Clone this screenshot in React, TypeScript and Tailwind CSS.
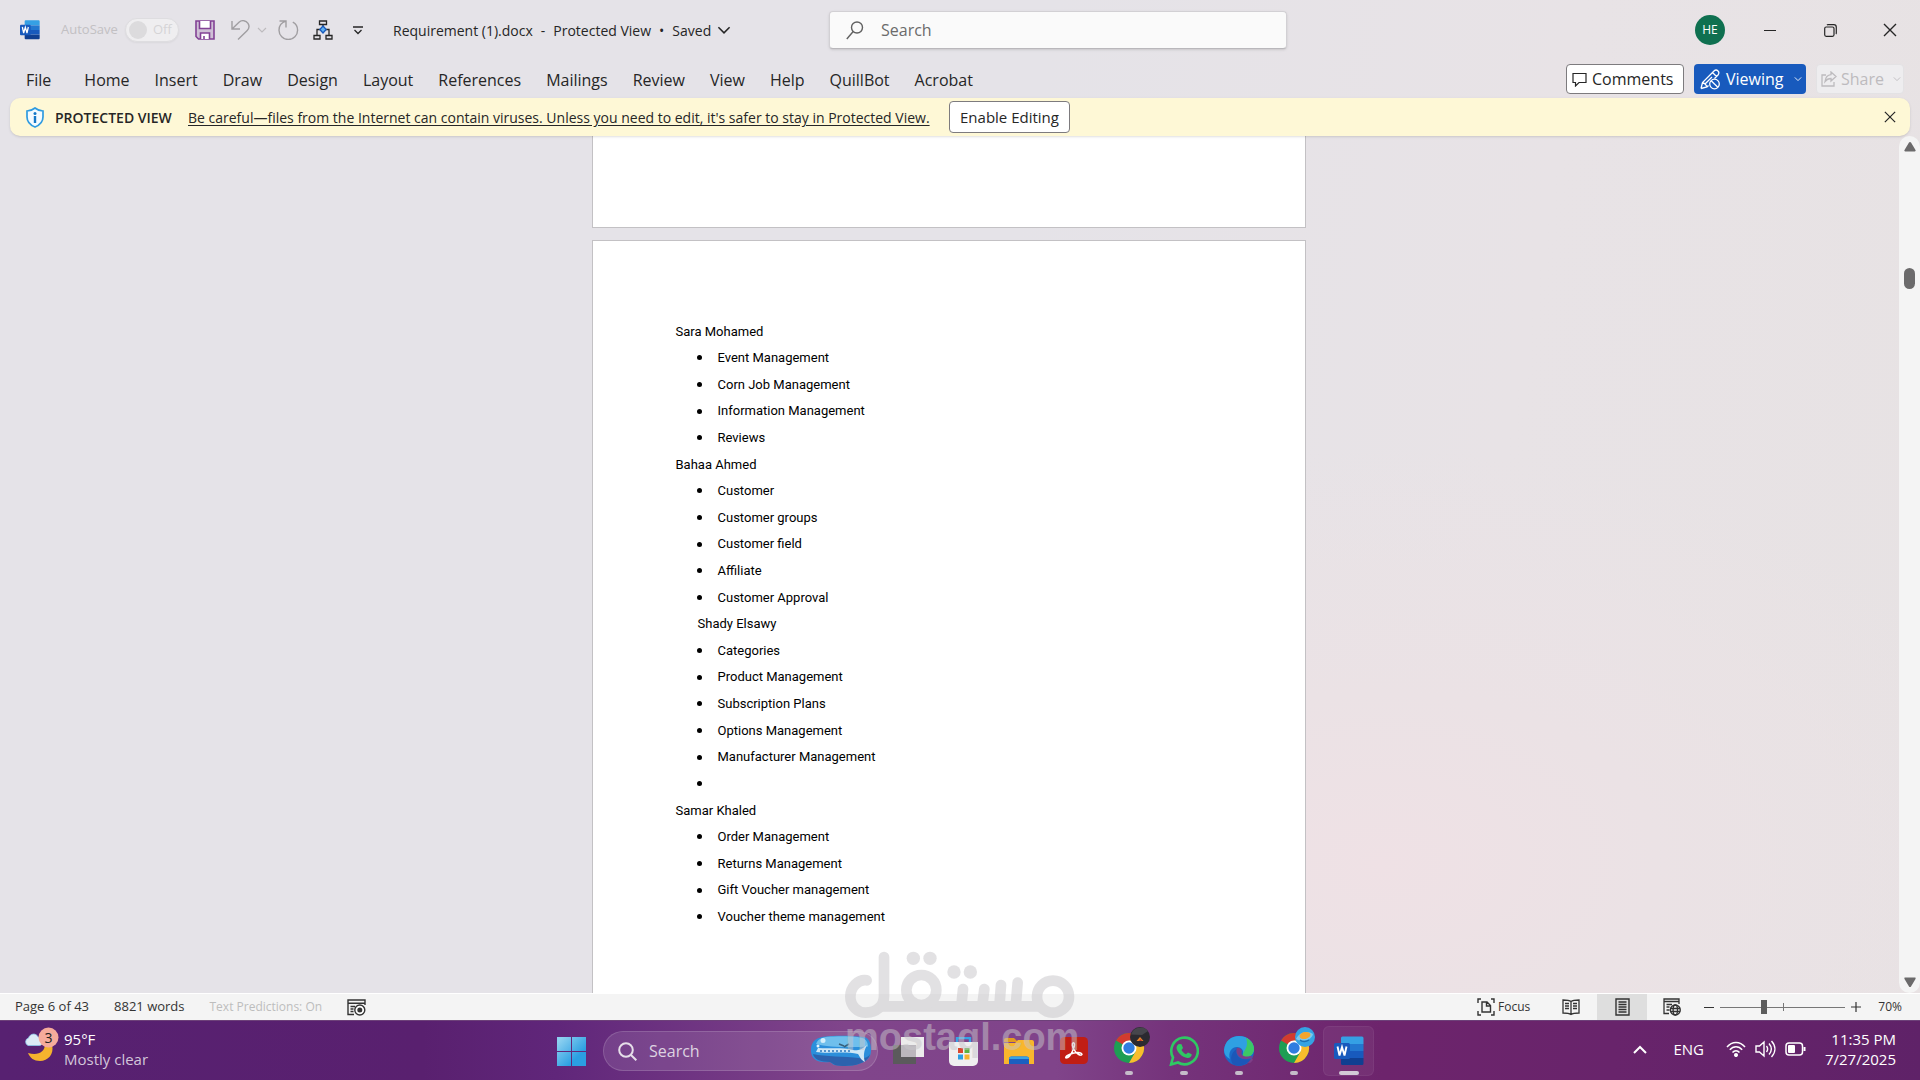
import React from "react";

type Kids = { children?: React.ReactNode };

const WordIcon = ({ size }: { size: number }) => (
  <svg width={size} height={size} viewBox="0 0 30 30" aria-hidden="true">
    <path d="M7 2a1.5 1.5 0 0 1 1.500-1.500H28A1.500 1.500 0 0 1 29.500 2v6H7z" fill="#35a0e4" />
    <path d="M7 8h22.500v7H7z" fill="#2377cf" />
    <path d="M7 15h22.500v7H7z" fill="#185abd" />
    <path d="M7 22h22.500v5.500A1.500 1.500 0 0 1 28 29H8.500A1.500 1.500 0 0 1 7 27.500z" fill="#103f91" />
    <rect x="0" y="7" width="16" height="16" rx="1.500" fill="#185abd" />
    <path d="M3.500 10.500l2 9 2.500-8.500 2.500 8.500 2-9" fill="none" stroke="#fff" strokeWidth="1.900" />
  </svg>
);

const Chevron = ({ size = 10, className = "" }: { size?: number; className?: string }) => (
  <svg width={size} height={size} viewBox="0 0 10 10" className={className} fill="none" stroke="currentColor" strokeWidth="1.100" aria-hidden="true">
    <path d="M1 3l4 4 4-4" />
  </svg>
);

const CloseIcon = ({ size = 14 }: { size?: number }) => (
  <svg width={size} height={size} viewBox="0 0 14 14" stroke="currentColor" strokeWidth="1.400" aria-hidden="true">
    <path d="M1 1l12 12M13 1L1 13" />
  </svg>
);

const ChromeIcon = ({ badge }: { badge: "dark" | "blue" }) => (
  <svg width="38" height="38" viewBox="0 0 38 38" aria-hidden="true">
    <circle cx="16" cy="22" r="15" fill="#1e9e54" />
    <path d="M16 22L3 14.500A15 15 0 0 1 29 14.500H16z" fill="#d23b2f" />
    <path d="M16 14.500h13a15 15 0 0 1-13 22.500l6.500-11.200z" fill="#f9bd2c" />
    <circle cx="16" cy="22" r="7.500" fill="#fff" />
    <circle cx="16" cy="22" r="5.700" fill="#2f7de0" />
    <circle cx="27" cy="11" r="10" fill={badge === "dark" ? "#2b2a30" : "#35a3e3"} />
    {badge === "dark" ? (
      <g>
        <path d="M18 8.500a10 10 0 0 1 17-3.500l-6 4z" fill="#46464c" />
        <path d="M23.500 15l3.500-4 3.500 4z" fill="#e8862a" />
        <path d="M26 15l1.500-2 1.500 2z" fill="#c2352c" />
      </g>
    ) : (
      <g>
        <path d="M18 13c3-7 12-9 17-5-1 6-11 9-17 5z" fill="#7cc8ee" />
        <ellipse cx="27" cy="9.500" rx="5.500" ry="3.500" fill="#f2a52c" transform="rotate(-12 27 9.500)" />
        <path d="M22 14c2 2 6 2 9 0" stroke="#1b6fb4" strokeWidth="1.500" fill="none" />
      </g>
    )}
  </svg>
);

const QuickButton = ({ label, children, className = "" }: Kids & { label: string; className?: string }) => (
  <button type="button" aria-label={label} className={"flex items-center justify-center " + className}>
    {children}
  </button>
);

function TitleBar() {
  return (
    <header className="grid h-[60px] grid-cols-[829fr_458fr_633fr] items-center">
      <div className="flex items-center pl-5 text-[#262626]">
        <WordIcon size={20} />
        <label htmlFor="autosave" className="ml-[21px] w-[54px] text-[13px] whitespace-nowrap text-[#c2c0c3]">AutoSave</label>
        <span className="relative ml-2.5 flex h-6 w-[54px] items-center rounded-full border border-[#dedde0] bg-[#efeef0] shadow-xs">
          <input id="autosave" type="checkbox" role="switch" disabled className="absolute inset-0 appearance-none" />
          <span className="ml-[3px] size-[18px] rounded-full bg-[#dcdbdd]" />
          <span className="ml-1.5 text-[13px] text-[#d5d4d6]">Off</span>
        </span>
        <QuickButton label="Save" className="ml-4">
          <svg width="20" height="20" viewBox="0 0 20 20" fill="none" stroke="#824195" strokeWidth="1.600">
            <path d="M1 1h18v18H3.500L1 16.500z" fill="#cfc0d6" />
            <path d="M4.500 1v7.500h11V1" fill="#fff" />
            <path d="M5.500 19v-6h9v6M9 19v-3" fill="#fff" />
          </svg>
        </QuickButton>
        <QuickButton label="Undo" className="ml-4 text-[#a09ea1]">
          <svg width="19" height="20" viewBox="0 0 19 20" fill="none" stroke="currentColor" strokeWidth="1.400">
            <path d="M1 1v8h8M1.300 8.700L8 2.300C11-.3 15 .3 17 3.300c1.700 2.700 1 5.400-1 7.400l-9 8.800" />
          </svg>
        </QuickButton>
        <QuickButton label="Undo options" className="ml-[7px] text-[#bdbbbe]"><Chevron /></QuickButton>
        <QuickButton label="Repeat" className="ml-[11px] text-[#a09ea1]">
          <svg width="21" height="20" viewBox="0 0 21 20" fill="none" stroke="currentColor" strokeWidth="1.400">
            <path d="M1.500 1h6.500v6.500M8 1.200C3.500 2.500 1 6 1 10.200a9.300 9.300 0 0 0 18.600 0c0-3.500-1.800-6.400-4.800-8" />
          </svg>
        </QuickButton>
        <QuickButton label="Organization chart" className="ml-3.5">
          <svg width="20" height="20" viewBox="0 0 20 20" fill="none" stroke="#262626" strokeWidth="1.300">
            <path d="M6.500 1h7v3.500h-7zM1 15.500h6V19H1zM13 15.500h6V19h-6zM10 4.500v3M4 15.500v-6h3M16 15.500v-6h-3" />
            <path d="M10 6l3.200 3.500L10 13 6.800 9.500z" fill="#5fb0ef" stroke="#185abd" />
          </svg>
        </QuickButton>
        <QuickButton label="Customize Quick Access Toolbar" className="ml-5">
          <svg width="10" height="9" viewBox="0 0 10 9" fill="none" stroke="currentColor" strokeWidth="1.300">
            <path d="M0 1h10M1.500 4l3.500 3.500L8.500 4" />
          </svg>
        </QuickButton>
        <h1 className="ml-[30px] flex gap-2 text-[14px] whitespace-nowrap">
          <span>Requirement (1).docx</span>
          <span>-</span>
          <span>Protected View</span>
          <span>•</span>
          <span>Saved</span>
        </h1>
        <Chevron size={14} className="ml-1.5" />
      </div>
      <label className="flex h-[38px] items-center rounded border border-[#d2d0d4] border-b-[#b9b7bb] bg-[#fafafa] shadow-sm">
        <svg width="18" height="19" viewBox="0 0 18 19" className="ml-4 shrink-0" fill="none" stroke="#616161" strokeWidth="1.400" aria-hidden="true">
          <circle cx="11" cy="6.500" r="5.500" />
          <path d="M7.200 10.500L.8 18" />
        </svg>
        <input type="search" aria-label="Search" placeholder="Search" className="ml-[17px] w-full bg-transparent text-[16px] outline-none placeholder:text-[#6b6b6b]" />
      </label>
      <div className="flex items-center justify-end text-[#262626]">
        <button type="button" aria-label="Account" className="mr-[15px] size-[30px] rounded-full bg-[#0f7050] text-xs text-white">HE</button>
        <button type="button" aria-label="Minimize" className="flex h-12 w-[60px] items-center justify-center">
          <span className="h-px w-3 bg-[#262626]" />
        </button>
        <button type="button" aria-label="Restore" className="flex h-12 w-[60px] items-center justify-center">
          <svg width="13" height="13" viewBox="0 0 13 13" fill="none" stroke="currentColor" strokeWidth="1.200">
            <rect x=".7" y="3" width="9.300" height="9.300" rx="1.500" />
            <path d="M3 1.200C3.300.8 3.600.7 4 .7h5.800c1.500 0 2.500 1 2.500 2.500V9c0 .4-.1.700-.4 1" />
          </svg>
        </button>
        <button type="button" aria-label="Close" className="flex h-12 w-[60px] items-center justify-center"><CloseIcon /></button>
      </div>
    </header>
  );
}

const tabs = ["Home", "Insert", "Draw", "Design", "Layout", "References", "Mailings", "Review", "View", "Help", "QuillBot", "Acrobat"];

function RibbonTabs() {
  return (
    <nav className="flex h-[38px] items-center justify-between pr-4 pl-[26px] text-[16px] text-[#262626]">
      <div className="flex gap-[25px] pt-0.5">
        <button type="button" className="mr-2">File</button>
        {tabs.map((t) => <button type="button" key={t}>{t}</button>)}
      </div>
      <div className="flex gap-2.5">
        <button type="button" className="flex h-[30px] w-[118px] items-center rounded border border-[#7d7b7e] bg-white pl-[5px]">
          <svg width="15" height="15" viewBox="0 0 15 15" className="mr-[5px]" fill="none" stroke="currentColor" strokeWidth="1.200"><path d="M1 1.500h13v9H7L3.500 14v-3.500H1z" /></svg>
          Comments
        </button>
        <button type="button" className="flex h-[30px] w-[112px] items-center rounded bg-[#185abd] pl-1.5 text-white">
          <svg width="21" height="21" viewBox="0 0 21 21" className="mr-[5px]" fill="none" stroke="currentColor" strokeWidth="1.300">
            <path d="M1 19.500l1.500-6L14 2c1.300-1.200 2.800-1.200 4 0s1 2.700 0 4l-3.500 3.500M1 19.500l6-1.500 1.500-1.500M12.500 3.500l4 4M2.500 13.500c2 .5 3.500 2 4.500 4M5 15l7-7" />
            <circle cx="14.500" cy="15" r="4.800" /><path d="M11.200 11.700l6.600 6.600" />
          </svg>
          Viewing
          <Chevron size={8} className="mr-1 ml-auto" />
        </button>
        <button type="button" disabled className="flex h-[30px] w-[88px] items-center rounded border border-[#e3e2e4] bg-[#eeedef] pl-1 text-[#bdbbbe]">
          <svg width="16" height="16" viewBox="0 0 16 16" className="mr-1" fill="none" stroke="currentColor" strokeWidth="1.300">
            <path d="M5 4H1v11h12v-4M10 1l5 4.500-5 4.500V7.500c-3 0-4.500 1-6 3C4.500 6.500 6.500 4 10 3.700z" />
          </svg>
          Share
          <Chevron size={8} className="mr-0.5 ml-auto" />
        </button>
      </div>
    </nav>
  );
}

function ProtectedBanner() {
  return (
    <div role="alert" className="relative z-10 mx-2.5 flex h-[38px] items-center rounded-[10px] bg-[#fef8d6] pl-4 text-[14px] text-[#262626] shadow-sm">
      <svg width="18" height="21" viewBox="0 0 18 21" aria-hidden="true">
        <path d="M9 1c2.500 2 5 3 8 3v6c0 5-3 8-8 10-5-2-8-5-8-10V4c3 0 5.500-1 8-3z" fill="#f4fbff" stroke="#2f9be0" strokeWidth="1.700" />
        <circle cx="9" cy="6.500" r="1.500" fill="#1478c8" /><path d="M7.800 9h2.400v7H7.800z" fill="#1478c8" />
      </svg>
      <strong className="ml-[11px] w-[120px] font-semibold whitespace-nowrap">PROTECTED VIEW</strong>
      <a href="#protected-view" className="ml-[13px] w-[747px] whitespace-nowrap underline underline-offset-2">
        Be careful—files from the Internet can contain viruses. Unless you need to edit, it's safer to stay in Protected View.
      </a>
      <button type="button" className="ml-3.5 h-8 w-[121px] rounded border border-[#7d7b7e] bg-white text-[15px]">Enable Editing</button>
      <button type="button" aria-label="Close message" className="mr-[14px] ml-auto"><CloseIcon size={12} /></button>
    </div>
  );
}

const sections = [
  { name: "Sara Mohamed", indent: false, items: ["Event Management", "Corn Job Management", "Information Management", "Reviews"] },
  { name: "Bahaa Ahmed", indent: false, items: ["Customer", "Customer groups", "Customer field", "Affiliate", "Customer Approval"] },
  { name: "Shady Elsawy", indent: true, items: ["Categories", "Product Management", "Subscription Plans", "Options Management", "Manufacturer Management", ""] },
  { name: "Samar Khaled", indent: false, items: ["Order Management", "Returns Management", "Gift Voucher management", "Voucher theme management"] },
];

const ScrollArrow = ({ className = "" }: { className?: string }) => (
  <svg width="12" height="10" viewBox="0 0 12 10" fill="currentColor" className={className} aria-hidden="true">
    <path d="M6 0c.5 0 .8.200 1 .6l4.500 7.500c.4.900 0 1.400-.8 1.400H1.300C.5 9.500.1 9 .5 8.100L5 .6c.2-.4.500-.6 1-.6z" />
  </svg>
);

function DocumentArea() {
  return (
    <main className="flex min-h-0 flex-1 border-b border-white">
      <div className="flex min-w-0 flex-1 flex-col items-center overflow-hidden pr-0.5">
        <div className="h-[92px] w-[714px] shrink-0 border border-t-0 border-[#c3c1c4] bg-white" />
        <article className="mt-3 w-[714px] flex-1 border border-b-0 border-[#c3c1c4] bg-white pt-[77px] pl-[83px] font-['Roboto',sans-serif] text-[13px] text-black">
          <div className="grid h-[612px] auto-rows-fr items-center">
            {sections.map((s) => (
              <section key={s.name} className="contents">
                <h2 className={s.indent ? "pl-[22px]" : ""}>{s.name}</h2>
                <ul className="contents">
                  {s.items.map((item) => (
                    <li key={item} className="flex items-center pl-[21px]">
                      <span className="mr-4 size-[5px] rounded-full bg-black" />
                      {item}
                    </li>
                  ))}
                </ul>
              </section>
            ))}
          </div>
        </article>
      </div>
      <div className="flex w-[21px] flex-col items-center rounded-full bg-[#f4f4f4] py-1.5 text-[#6b6a6b]">
        <ScrollArrow />
        <div className="mt-[116px] h-[21px] w-[11px] rounded-full bg-[#6b6a6b]" />
        <ScrollArrow className="mt-auto rotate-180" />
      </div>
    </main>
  );
}

function StatusBar() {
  return (
    <div className="flex h-[26px] shrink-0 items-center justify-between bg-[#f4f4f4] pr-[18px] pl-[15px] text-[13px] text-[#333]">
      <div className="flex items-center gap-[25px]">
        <span>Page 6 of 43</span>
        <span>8821 words</span>
        <span className="text-xs text-[#bdbdbd]">Text Predictions: On</span>
        <button type="button" aria-label="Record macro">
          <svg width="19" height="17" viewBox="0 0 19 17" fill="none" stroke="#333" strokeWidth="1.400">
            <path d="M7 15.500H1V1h17v5M1 4.300h17M3.500 7.500H8M3.500 10h3M3.500 12.500h3" />
            <circle cx="12.800" cy="11" r="5" fill="#fff" /><circle cx="12.800" cy="11" r="1.800" fill="#333" />
          </svg>
        </button>
      </div>
      <div className="flex h-full items-center">
        <button type="button" className="mr-8 flex items-center gap-[3px] text-xs">
          <svg width="18" height="18" viewBox="0 0 18 18" fill="none" stroke="#333" strokeWidth="1.400">
            <path d="M1 5V1h3M14 1h3v4M1 13v4h3M14 17h3v-4M5 4h5l3.500 3.500V14H5zM9.500 4v4h4" />
          </svg>
          Focus
        </button>
        <button type="button" aria-label="Read mode" className="mr-[17px]">
          <svg width="18" height="17" viewBox="0 0 18 17" fill="none" stroke="#333" strokeWidth="1.300">
            <path d="M9 2.500C7 1 4 1 1 1v13c3 0 6 0 8 1.500 2-1.500 5-1.500 8-1.500V1c-3 0-6 0-8 1.500zM9 2.500v13M3 4.500h4M3 7h4M3 9.500h4M11 4.500h4M11 7h4M11 9.500h4" />
          </svg>
        </button>
        <button type="button" aria-label="Print layout" className="flex h-full w-[50px] items-center justify-center bg-[#dedede]">
          <svg width="15" height="18" viewBox="0 0 15 18" fill="none" stroke="#333" strokeWidth="1.400">
            <path d="M1 1h13v16H1zM3.500 4h8M3.500 6.500h8M3.500 9h8M3.500 11.500h8M3.500 14h8" />
          </svg>
        </button>
        <button type="button" aria-label="Web layout" className="ml-4">
          <svg width="18" height="18" viewBox="0 0 18 18" fill="none" stroke="#333" strokeWidth="1.300">
            <path d="M6 15.500H1V1h15v5M1 3.500h15M3.500 6.500H9M3.500 9h3M3.500 12h3" />
            <circle cx="12.300" cy="12" r="5" fill="#f4f4f4" /><ellipse cx="12.300" cy="12" rx="2.200" ry="5" /><path d="M7.500 10.500h9.600M7.500 13.500h9.600" />
          </svg>
        </button>
        <button type="button" aria-label="Zoom out" className="ml-[23px] flex h-4 w-2.5 items-center"><span className="h-px w-2.5 bg-[#333]" /></button>
        <span className="relative mx-1.5 flex h-4 w-[125px] items-center">
          <span className="absolute inset-y-1 left-1/2 w-px bg-[#777]" />
          <input
            type="range" aria-label="Zoom" min={0} max={100} defaultValue={34}
            className="relative h-4 w-full appearance-none bg-transparent [&::-webkit-slider-runnable-track]:h-px [&::-webkit-slider-runnable-track]:bg-[#777] [&::-webkit-slider-thumb]:-mt-[7px] [&::-webkit-slider-thumb]:h-3.5 [&::-webkit-slider-thumb]:w-1.5 [&::-webkit-slider-thumb]:appearance-none [&::-webkit-slider-thumb]:bg-[#5c5c5c]"
          />
        </span>
        <button type="button" aria-label="Zoom in">
          <svg width="10" height="10" viewBox="0 0 10 10" stroke="#333" strokeWidth="1.200"><path d="M5 0v10M0 5h10" /></svg>
        </button>
        <span className="ml-[17px] text-xs">70%</span>
      </div>
    </div>
  );
}

const TaskButton = ({ label, running, children }: Kids & { label: string; running?: boolean }) => (
  <button type="button" aria-label={label} className="relative flex h-[60px] w-[55px] items-center justify-center">
    {children}
    {running && <span className="absolute bottom-1.5 h-1 w-2 rounded-full bg-[#c5bcc9]" />}
  </button>
);

function Taskbar() {
  return (
    <footer className="grid h-[60px] shrink-0 grid-cols-[1fr_auto_1fr] items-center border-t border-[#6d4179] bg-[linear-gradient(90deg,#572171_0%,#59206f_22%,#60267a_29%,#80458b_44%,#80448a_55%,#75337b_61%,#6d246c_72%,#68246b_84%,#5f2268_100%)] text-white">
      <button type="button" className="flex h-12 items-center pb-1 pl-[25px] text-left text-[15px] leading-5">
        <svg width="34" height="35" viewBox="0 0 34 35" className="self-start" aria-hidden="true">
          <path d="M27 18c2.500 9-4 16-12 16-6 0-10-3-12-8 10 3 17-1 17-9z" fill="#f5b32e" />
          <path d="M3 18.500a4 4 0 0 1 .5-7.500C5 6.500 11 5.500 13 10c3.500 0 5 2.500 5 4.500s-1.500 4-4 4z" fill="#dceaf6" stroke="#8cc8ea" strokeWidth=".8" />
          <circle cx="23.500" cy="10.500" r="10" fill="#f6ab9b" />
          <text x="23.500" y="15.500" textAnchor="middle" fontSize="14" fill="#222">3</text>
        </svg>
        <span className="ml-[5px] flex flex-col">
          <span>95°F</span>
          <span className="text-[#d3c6da]">Mostly clear</span>
        </span>
      </button>
      <div className="flex items-center">
        <TaskButton label="Start">
          <svg width="29" height="29" viewBox="0 0 29 29">
            <defs><linearGradient id="win" x1="0" y1="0" x2="1" y2="1"><stop offset=".1" stopColor="#8dd0f0" /><stop offset=".7" stopColor="#2b9fe2" /></linearGradient></defs>
            <path d="M0 0h14v14H0zM15 0h14v14H15zM0 15h14v14H0zM15 15h14v14H15z" fill="url(#win)" />
          </svg>
        </TaskButton>
        <label className="mr-[3px] ml-1 flex h-10 w-[275px] items-center rounded-full border border-white/15 bg-white/10 pr-1.5">
          <svg width="19" height="19" viewBox="0 0 19 19" className="ml-3.5 shrink-0" fill="none" stroke="#e6dfe9" strokeWidth="2" aria-hidden="true"><circle cx="8" cy="8" r="6.800" /><path d="M13 13l5.300 5.300" /></svg>
          <input type="search" aria-label="Search Windows" placeholder="Search" className="ml-3 w-24 flex-1 bg-transparent text-[16px] outline-none placeholder:text-[#ddd3e1]" />
          <svg width="61" height="32" viewBox="0 0 61 32" aria-hidden="true">
            <path d="M1 13C2 5 8 2 16 1.500 28 0 44 1 54 2c5 1 7 6 7 13 0 8-4 11-10 13-9 4-20 3-27 2l-4-3C8 28 0 25 1 13z" fill="#2b8fdb" />
            <path d="M6 9C8 3 14 1.500 24 1.500c12-.5 24 0 30 2 3 2 4 5 4 8-14 1-40 1-52-2.500z" fill="#6fbfec" />
            <path d="M3 19c12 3 32 2 46 4 4 1 9 0 11-4-1 5-5 8-10 9.500-8 3-18 3-25 1.500l-5-3C10 27 4 24 3 19z" fill="#2c62ad" />
            <path d="M8 13c12 1 24-1 35 2 4 1 8 0 14-5-3 5-4 11-2 17-4-2-5-5-7-8-13-3-30 0-42-2z" fill="#cfe8f6" />
            <path d="M10 16l30 0" stroke="#2b77bf" strokeWidth="1.500" strokeDasharray="2 2" />
            <circle cx="13" cy="5.500" r="2.500" fill="#d5effb" /><circle cx="8" cy="11" r="1.500" fill="#e5f6fd" />
            <path d="M34 12l5-3M29 9l5 2" stroke="#38607a" strokeWidth="1.500" />
          </svg>
        </label>
        <TaskButton label="Task view">
          <svg width="31" height="30" viewBox="0 0 31 30">
            <path d="M0 9h23v19H0z" fill="#5b5a5c" /><path d="M8 1h23v20H8z" fill="#ececec" /><path d="M8 9h15v12H8z" fill="#bbb7bd" />
          </svg>
        </TaskButton>
        <TaskButton label="Microsoft Store">
          <svg width="29" height="29" viewBox="0 0 29 29">
            <path d="M8 6V1h13v5" fill="none" stroke="#37a3e4" strokeWidth="2.400" />
            <path d="M0 5h29v19a5 5 0 0 1-5 5H5a5 5 0 0 1-5-5z" fill="#efeff0" />
            <path d="M9 11h5v5H9z" fill="#d9482f" /><path d="M15.500 11h5v5h-5z" fill="#5ab341" /><path d="M9 17.500h5v5H9z" fill="#2b9fe2" /><path d="M15.500 17.500h5v5h-5z" fill="#f5b32e" />
          </svg>
        </TaskButton>
        <TaskButton label="File Explorer">
          <svg width="30" height="28" viewBox="0 0 30 28">
            <path d="M0 3a2 2 0 0 1 2-2h8l4 4H0z" fill="#e39b1e" /><path d="M0 6h11l3-3h14a2 2 0 0 1 2 2v22H0z" fill="#f8b62d" />
            <path d="M5 27v-5a2.500 2.500 0 0 1 2.500-2.500h15A2.500 2.500 0 0 1 25 22v5z" fill="#1c5fc0" /><path d="M5 22a2.500 2.500 0 0 1 2.500-2.500h15A2.500 2.500 0 0 1 25 22z" fill="#37a3e4" />
          </svg>
        </TaskButton>
        <TaskButton label="Adobe Acrobat">
          <svg width="28" height="28" viewBox="0 0 28 28">
            <rect width="28" height="27" rx="4.500" fill="#c11e14" />
            <path d="M13 6c2-1 2 3 0 7-2 5-5 8-7 8-1.500-1 3-4 8-5s8 0 8 1.500c-1 2-6-1-8-5-2-3-2-6-1-6.500z" fill="none" stroke="#fff" strokeWidth="1.500" />
          </svg>
        </TaskButton>
        <TaskButton label="Chrome" running><span className="-mt-3 ml-[7px]"><ChromeIcon badge="dark" /></span></TaskButton>
        <TaskButton label="WhatsApp" running>
          <svg width="30" height="30" viewBox="0 0 30 30">
            <path d="M2 28.500l2-7A13.300 13.300 0 1 1 9 26.500z" fill="none" stroke="#2fc863" strokeWidth="2.600" />
            <path d="M10.500 8l2 .2 1.500 3.800-1.500 2c1 2 2.500 3.300 4.500 4.200l2-1.800 3.700 1.800c.2 2-1.700 4-4.200 3.800C13 21.500 8 16 7.500 12c0-2 1.500-4 3-4z" fill="#2fc863" />
          </svg>
        </TaskButton>
        <TaskButton label="Edge" running>
          <svg width="30" height="30" viewBox="0 0 30 30">
            <circle cx="15" cy="15" r="15" fill="#1a68c7" />
            <path d="M0 14C1 5 7 0 15 0c9 0 15 6 15 13 0 5-4 8-8 8-3 0-4-1-3-3 1-4-2-7-6-7-6 0-9 6-7 12C2 21 0 18 0 14z" fill="#2fa0e2" />
            <path d="M22 1.700C27 4 30 8.500 30 13c0 5-4 8-8 8-3 0-4-1-3-3 1.500-5 6-7 3-16.300z" fill="#3cc866" />
            <path d="M13 11c-3 3-3 9 1 12 4 3 9 2 14-1l1 2c-1 1-2 2.500-3 3-5 0-15-3-15-10 0-3 1-5 2-6z" fill="#7c3f88" />
            <path d="M13 13c-2 5 1 12 14 10-4 6-11 8-17 6-5-4-3-13 3-16z" fill="#1c57b8" />
            <path d="M13 12c-2 4 1 11 8 11 3 0 5-.5 8-2l-2-1c-8 2-11-2-9-5-1-3-4-4-5-3z" fill="#7c3f88" />
          </svg>
        </TaskButton>
        <TaskButton label="Chrome, second profile" running><span className="-mt-3 ml-[7px]"><ChromeIcon badge="blue" /></span></TaskButton>
        <button type="button" aria-label="Word" className="relative mx-0.5 flex h-[50px] w-[51px] items-center justify-center rounded-md border border-white/5 bg-white/5">
          <WordIcon size={30} />
          <span className="absolute bottom-0 h-1 w-5 rounded-full bg-[#d3cad6]" />
        </button>
      </div>
      <div className="flex h-12 items-center justify-end pr-6 pb-1 text-[15px] leading-5">
        <button type="button" aria-label="Show hidden icons" className="mr-[26px]">
          <svg width="14" height="9" viewBox="0 0 14 9" fill="none" stroke="currentColor" strokeWidth="2"><path d="M1 8l6-6 6 6" /></svg>
        </button>
        <button type="button" className="mr-[22px]">ENG</button>
        <button type="button" aria-label="Network, volume and battery" className="mr-[19px] flex items-center gap-[9px]">
          <svg width="20" height="16" viewBox="0 0 20 16" fill="none" stroke="currentColor" strokeWidth="1.500">
            <path d="M1 6c5-6 13-6 18 0M3.800 8.800c3.500-4.200 8.900-4.200 12.400 0M6.500 11.500c2-2.400 5-2.400 7 0" /><circle cx="10" cy="14" r="1.300" fill="currentColor" />
          </svg>
          <svg width="21" height="18" viewBox="0 0 21 18" fill="none" stroke="currentColor" strokeWidth="1.400">
            <path d="M1 6h3.500L9 2v14l-4.500-4H1zM11.500 6c1.500 2 1.500 4 0 6M14 3.500c3 3.500 3 7.500 0 11M16.500 1c4.500 5 4.500 11 0 16" />
          </svg>
          <svg width="21" height="14" viewBox="0 0 21 14" fill="none" stroke="currentColor" strokeWidth="1.500">
            <rect x="1" y="1" width="16.500" height="12" rx="3" /><rect x="3" y="3" width="7" height="8" rx="1" fill="currentColor" stroke="none" /><path d="M19.500 5v4" strokeWidth="2" />
          </svg>
        </button>
        <button type="button" className="flex flex-col items-end">
          <span>11:35 PM</span>
          <span>7/27/2025</span>
        </button>
      </div>
    </footer>
  );
}

function Watermark() {
  return (
    <div className="pointer-events-none absolute bottom-6 left-1/2 z-20 w-[230px] -translate-x-1/2 opacity-50">
      <svg viewBox="0 0 690 202" className="block w-full" fill="none" stroke="#c7c5c9" strokeWidth="32" strokeLinecap="round" aria-hidden="true">
        <path d="M65 88C40 84 16 108 16 137c0 28 22 48 46 48 32 0 55-20 55-50V18" />
        <path d="M100 166h490" strokeLinecap="butt" />
        <circle cx="229" cy="117" r="45" /><circle cx="624" cy="137" r="48" />
        <path d="M350 155l4-41M413 155l5-41M464 155l4-53M513 155l5-60" />
        <g fill="#c7c5c9" stroke="none"><circle cx="205" cy="22" r="20" /><circle cx="255" cy="22" r="20" /><circle cx="327" cy="63" r="20" /><circle cx="376" cy="63" r="20" /></g>
      </svg>
      <div className="text-center font-['Liberation_Sans',sans-serif] text-[38px] leading-[38px] font-bold text-[#c7c5c9]">mostaql.com</div>
    </div>
  );
}

export default function App() {
  return (
    <div className="relative flex h-screen flex-col overflow-hidden bg-[#e5e3e8] bg-[radial-gradient(ellipse_at_72%_80%,#efe1e5_0%,#ebe2e5_14%,transparent_34%),linear-gradient(100deg,#e5e3e8_50%,#e8e3e6_75%,#e7e2e3_100%)] font-['Open_Sans',sans-serif]">
      <TitleBar />
      <RibbonTabs />
      <ProtectedBanner />
      <DocumentArea />
      <StatusBar />
      <Taskbar />
      <Watermark />
    </div>
  );
}
